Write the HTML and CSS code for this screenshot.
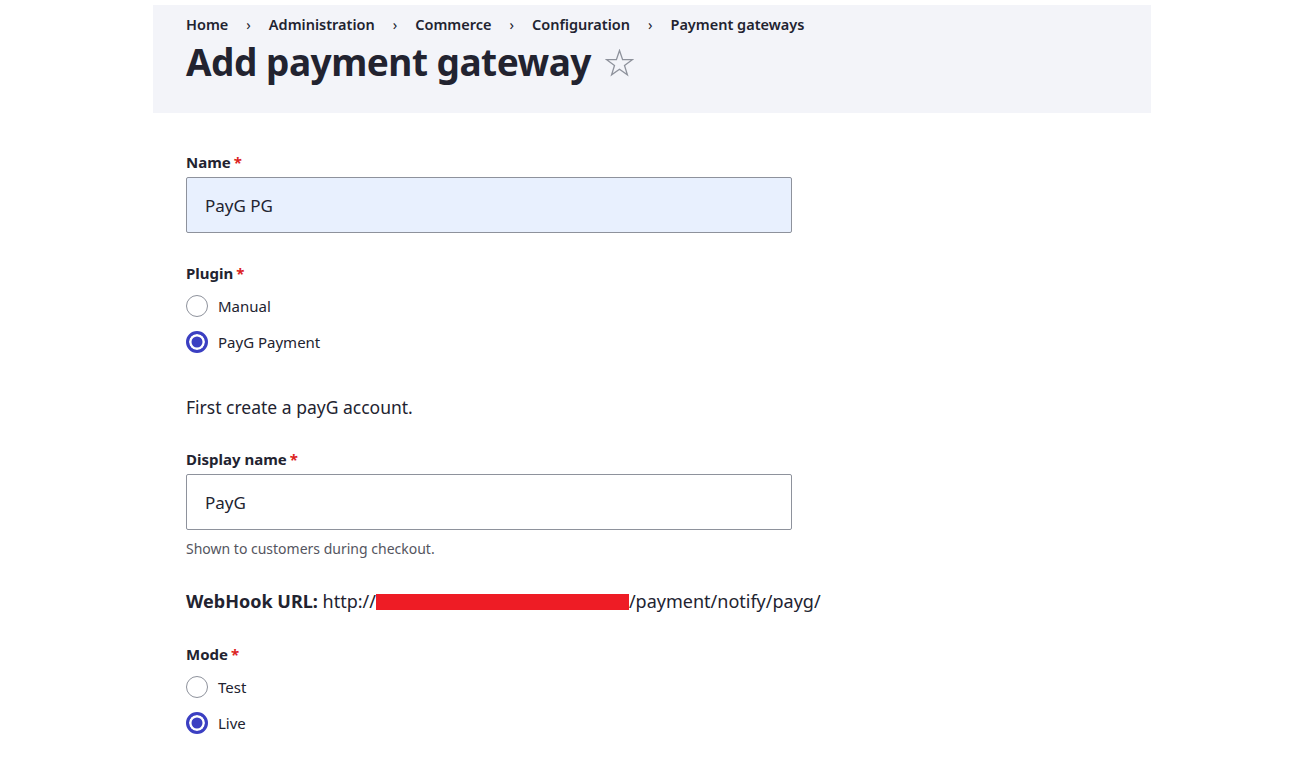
FILE: index.html
```html
<!DOCTYPE html>
<html lang="en">
<head>
    <meta charset="UTF-8">
    <title>Add payment gateway</title>
    <link rel="stylesheet" href="styles.css">
</head>
<body>
    <div class="page">
        <div class="page-header">
            <nav class="breadcrumb">
                <a href="#">Home</a>
                <span class="sep">›</span>
                <a href="#">Administration</a>
                <span class="sep">›</span>
                <a href="#">Commerce</a>
                <span class="sep">›</span>
                <a href="#">Configuration</a>
                <span class="sep">›</span>
                <a href="#">Payment gateways</a>
            </nav>
            <h1 class="page-title">
                Add payment gateway
                <svg class="star" width="29" height="28" viewBox="0 0 29 28">
                    <path d="M14.5 1.5 L17.6 10.6 L27.3 10.7 L19.5 16.5 L22.4 25.8 L14.5 20.2 L6.6 25.8 L9.5 16.5 L1.7 10.7 L11.4 10.6 Z" fill="none" stroke="#8e929c" stroke-width="1.3" stroke-linejoin="miter"/>
                </svg>
            </h1>
        </div>

        <form class="form">
            <div class="form-item">
                <label class="form-label" for="name">Name<span class="req">*</span></label>
                <input class="form-text autofill" type="text" id="name" value="PayG PG">
            </div>

            <div class="form-item">
                <div class="form-label">Plugin<span class="req">*</span></div>
                <label class="radio"><input type="radio" name="plugin"> <span>Manual</span></label>
                <label class="radio"><input type="radio" name="plugin" checked> <span>PayG Payment</span></label>
            </div>

            <p class="intro">First create a payG account.</p>

            <div class="form-item">
                <label class="form-label" for="display">Display name<span class="req">*</span></label>
                <input class="form-text" type="text" id="display" value="PayG">
                <div class="description">Shown to customers during checkout.</div>
            </div>

            <p class="webhook"><strong>WebHook URL:</strong> http://<span class="redacted"></span>/payment/notify/payg/</p>

            <div class="form-item">
                <div class="form-label">Mode<span class="req">*</span></div>
                <label class="radio"><input type="radio" name="mode"> <span>Test</span></label>
                <label class="radio"><input type="radio" name="mode" checked> <span>Live</span></label>
            </div>
        </form>
    </div>
</body>
</html>
```

FILE: styles.css
```css
body {
    margin: 0;
    font-family: "Noto Sans", "Open Sans", sans-serif;
    color: #222330;
    background: #fff;
}

.page {
    width: 998px;
    margin: 5px 0 0 153px;
}

.page-header {
    background-color: #f3f4f9;
    padding: 9px 33px 20px;
    height: 79px;
}

.breadcrumb {
    display: flex;
    align-items: center;
    font-size: 14.5px;
    line-height: 20px;
    font-weight: 600;
}

.breadcrumb a {
    color: #222330;
    text-decoration: none;
}

.breadcrumb .sep {
    margin: 0 18px;
    font-weight: 400;
}

.page-title {
    display: flex;
    align-items: center;
    margin: 3px 0 0;
    font-size: 37px;
    line-height: 50px;
    font-weight: 700;
    letter-spacing: -0.5px;
}

.star {
    margin-left: 14px;
    margin-top: 2px;
}

.form {
    padding: 39px 33px 0;
}

.form-item {
    margin-bottom: 30px;
}

.form-label {
    display: block;
    font-size: 15px;
    font-weight: 700;
    line-height: 20px;
    margin-bottom: 5px;
}

.req {
    color: #dc2323;
    margin-left: 3px;
}

.form-text {
    box-sizing: border-box;
    width: 606px;
    height: 56px;
    padding: 0 18px;
    font: inherit;
    font-size: 17px;
    color: #222330;
    border: 1px solid #8e929c;
    border-radius: 2px;
    background: #fff;
}

.form-text.autofill {
    background-color: #e8f0fe;
}

.radio {
    display: flex;
    align-items: center;
    height: 36px;
    font-size: 15px;
}

.radio input {
    appearance: none;
    box-sizing: border-box;
    width: 22px;
    height: 22px;
    margin: 0 10px 0 0;
    border: 1px solid #8e929c;
    border-radius: 50%;
    background: #fff;
}

.radio input:checked {
    border: 3px solid #3b3fc2;
    box-shadow: inset 0 0 0 2.5px #fff;
    background: #3b3fc2;
}

.intro {
    font-size: 17.5px;
    margin: 0 0 30px;
    padding-top: 5px;
    line-height: 24px;
}

.description {
    font-size: 14px;
    color: #545560;
    margin-top: 9px;
}

.webhook {
    font-size: 18px;
    margin: 0 0 31px;
    padding-top: 1px;
}

.redacted {
    display: inline-block;
    width: 253px;
    height: 16px;
    vertical-align: -2px;
    background: #ee1c25;
}
```
